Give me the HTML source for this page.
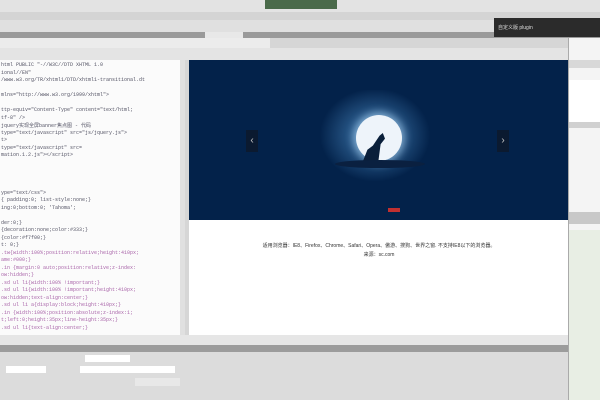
<!DOCTYPE html>
<html><head><meta charset="utf-8"><style>
*{margin:0;padding:0;box-sizing:border-box}
body{width:600px;height:400px;overflow:hidden;background:#d6d6d6;font-family:"Liberation Sans","Noto Sans CJK SC",sans-serif;font-size:5px;position:relative}
.a{position:absolute}
.code div{height:7.5px;white-space:nowrap;color:#556;font-family:"Liberation Mono",monospace;font-size:5px}
</style></head><body>
<div class="a" style="left:0;top:0;width:600px;height:12px;background:#e3e3e3"></div>
<div class="a" style="left:265px;top:0;width:72px;height:9px;background:#4a6a4a"></div>
<div class="a" style="left:0;top:12px;width:600px;height:8px;background:#d4d4d4"></div>
<div class="a" style="left:0;top:20px;width:600px;height:12px;background:#e0e0e0"></div>
<div class="a" style="left:0;top:32px;width:600px;height:6px;background:#9a9a9a"></div>
<div class="a" style="left:205px;top:32px;width:38px;height:6px;background:#e8e8e8"></div>
<div class="a" style="left:494px;top:18px;width:106px;height:19px;background:#2b2b2b;color:#ddd;padding:6px 4px">自定义版 plugin</div>
<div class="a" style="left:0;top:38px;width:270px;height:10px;background:#ececec"></div>
<div class="a" style="left:0;top:48px;width:600px;height:12px;background:#e4e4e4"></div>
<div class="a" style="left:0;top:60px;width:183px;height:275px;background:#fbfbfb"></div>
<div class="a" style="left:180px;top:60px;width:5px;height:275px;background:#e0e0e0"></div>
<div class="a code" style="left:1px;top:62px;width:178px;overflow:hidden">
<div>html PUBLIC "-//W3C//DTD XHTML 1.0</div><div>ional//EN"</div><div>/www.w3.org/TR/xhtml1/DTD/xhtml1-transitional.dt</div><div></div><div>mlns="http://www.w3.org/1999/xhtml"&gt;</div><div></div><div>ttp-equiv="Content-Type" content="text/html;</div><div>tf-8" /&gt;</div><div>jquery实现全屏banner焦点图 - 代码</div><div>type="text/javascript" src="js/jquery.js"&gt;</div><div>t&gt;</div><div> type="text/javascript" src=</div><div>mation.1.2.js"&gt;&lt;/script&gt;</div><div></div><div></div><div></div><div></div><div>ype="text/css"&gt;</div><div>{ padding:0; list-style:none;}</div><div>ing:0;bottom:0; 'Tahoma';</div><div></div><div>der:0;}</div><div>{decoration:none;color:#333;}</div><div>{color:#f7f00;}</div><div>t: 0;}</div><div style="color:#a6a">.tw{width:100%;position:relative;height:410px;</div><div style="color:#a6a">ame:#000;}</div><div style="color:#a6a">.in {margin:0 auto;position:relative;z-index:</div><div style="color:#a6a">ow:hidden;}</div><div style="color:#a6a">.sd ul li{width:100% !important;}</div><div style="color:#a6a">.sd ul li{width:100% !important;height:410px;</div><div style="color:#a6a">ow:hidden;text-align:center;}</div><div style="color:#a6a">.sd ul li a{display:block;height:410px;}</div><div style="color:#a6a">.in {width:100%;position:absolute;z-index:1;</div><div style="color:#a6a">t;left:0;height:35px;line-height:35px;}</div><div style="color:#a6a">.sd ul li{text-align:center;}</div>
</div>
<div class="a" style="left:189px;top:60px;width:379px;height:160px;background:#03224a"></div>
<div class="a" style="left:310px;top:90px;width:130px;height:100px;background:radial-gradient(ellipse at 50% 45%,rgba(90,160,220,.75),rgba(3,34,74,0) 60%)"></div>
<div class="a" style="left:356px;top:115px;width:46px;height:46px;border-radius:50%;background:#eef4fa;box-shadow:0 0 8px 3px rgba(180,220,250,.6)"></div>
<div class="a" style="left:363px;top:133px;width:22px;height:28px;background:#0a1f3a;clip-path:polygon(0 100%,20% 60%,45% 45%,75% 10%,90% 0,100% 20%,80% 40%,70% 100%)"></div>
<div class="a" style="left:335px;top:160px;width:90px;height:8px;border-radius:50%;background:#0a2040"></div>
<div class="a" style="left:246px;top:130px;width:12px;height:22px;background:#0b1a30;color:#ccc;font-size:10px;text-align:center;line-height:22px">‹</div>
<div class="a" style="left:497px;top:130px;width:12px;height:22px;background:#0b1a30;color:#ccc;font-size:10px;text-align:center;line-height:22px">›</div>
<div class="a" style="left:388px;top:208px;width:12px;height:4px;background:#c03030"></div>
<div class="a" style="left:189px;top:220px;width:379px;height:115px;background:#fff"></div>
<div class="a" style="left:190px;top:242px;width:378px;text-align:center;color:#333;font-size:5px;line-height:9px">适用浏览器：IE8、Firefox、Chrome、Safari、Opera、傲游、搜狗、世界之窗. 不支持IE8以下的浏览器。<br>来源：sc.com</div>
<div class="a" style="left:189px;top:335px;width:379px;height:10px;background:#e6e6e6"></div>
<div class="a" style="left:0;top:335px;width:189px;height:10px;background:#e6e6e6"></div>
<div class="a" style="left:0;top:345px;width:600px;height:7px;background:#9c9c9c"></div>
<div class="a" style="left:0;top:352px;width:568px;height:48px;background:#dcdcdc"></div>
<div class="a" style="left:85px;top:355px;width:45px;height:7px;background:#fff"></div>
<div class="a" style="left:6px;top:366px;width:40px;height:7px;background:#fff"></div>
<div class="a" style="left:80px;top:366px;width:95px;height:7px;background:#fff"></div>
<div class="a" style="left:135px;top:378px;width:45px;height:8px;background:#e8e8e8"></div>
<div class="a" style="left:568px;top:38px;width:32px;height:362px;background:#f4f4f4;border-left:1px solid #aaa"></div>
<div class="a" style="left:569px;top:60px;width:31px;height:8px;background:#d8d8d8"></div>
<div class="a" style="left:569px;top:80px;width:31px;height:42px;background:#fff"></div>
<div class="a" style="left:569px;top:122px;width:31px;height:6px;background:#d0d0d0"></div>
<div class="a" style="left:569px;top:212px;width:31px;height:12px;background:#c8c8c8"></div>
<div class="a" style="left:569px;top:230px;width:31px;height:170px;background:#e8eee4"></div>
</body></html>
